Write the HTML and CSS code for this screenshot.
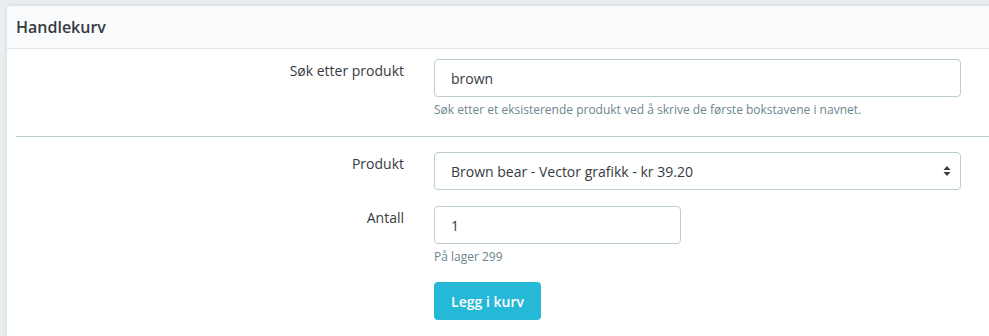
FILE: index.html
```html
<!DOCTYPE html>
<html lang="no">
<head>
<meta charset="utf-8">
<title>Handlekurv</title>
<link rel="stylesheet" href="styles.css">
</head>
<body>
<div class="card">
  <div class="card-header">Handlekurv</div>
  <div class="card-body">
    <div class="form-row">
      <label class="form-label" for="search">Søk etter produkt</label>
      <div class="form-field">
        <input id="search" class="input input-wide" type="text" value="brown">
        <div class="help">Søk etter et eksisterende produkt ved å skrive de første bokstavene i navnet.</div>
      </div>
    </div>
    <hr class="divider">
    <div class="form-row">
      <label class="form-label" for="product">Produkt</label>
      <div class="form-field">
        <div class="select-wrap">
          <select id="product" class="input input-wide select">
            <option>Brown bear - Vector grafikk - kr 39.20</option>
          </select>
          <svg class="select-arrow" width="8" height="12" viewBox="0 0 8 12" aria-hidden="true"><path d="M4 1 L7.5 5 H0.5 Z M4 11 L0.5 7 H7.5 Z" fill="#363a41"/></svg>
        </div>
      </div>
    </div>
    <div class="form-row row-qty">
      <label class="form-label" for="qty">Antall</label>
      <div class="form-field">
        <input id="qty" class="input input-narrow" type="text" value="1">
        <div class="help">På lager 299</div>
        <button class="btn" type="button">Legg i kurv</button>
      </div>
    </div>
  </div>
</div>
</body>
</html>
```
FILE: styles.css
```css
html { overflow: hidden; height: 100%; }
body {
  margin: 0;
  height: 100%;
  background: #eaedef;
  font-family: "Open Sans", "Liberation Sans", sans-serif;
  color: #363a41;
  font-size: 14px;
  line-height: 1.5;
}
.card {
  margin: 5px 0 0 6px;
  width: 1010px;
  height: calc(100% - 5px);
  overflow: hidden;
  background: #fff;
  border: 1px solid #dbe6e9;
  border-bottom: 0;
  border-radius: 5px 5px 0 0;
  box-shadow: 0 0 4px 0 rgba(0,0,0,0.06);
  box-sizing: border-box;
}
.card-header {
  height: 43px;
  box-sizing: border-box;
  padding: 0 9px;
  display: flex;
  align-items: center;
  background: #fafbfc;
  border-bottom: 1px solid #dbe6e9;
  font-size: 16px;
  font-weight: 600;
  color: #363a41;
}
.card-body {
  padding: 10px 9px 0 9px;
}
.form-row {
  display: grid;
  grid-template-columns: 388px 1fr;
  column-gap: 30px;
  align-items: start;
}
.row-qty { margin-top: 16px; }
.form-label {
  text-align: right;
  line-height: 21px;
  padding-top: 1px;
}
.form-field {
  display: flex;
  flex-direction: column;
  align-items: flex-start;
}
.input {
  box-sizing: border-box;
  height: 38px;
  border: 1px solid #bbcdd2;
  border-radius: 4px;
  padding: 0 16px;
  font-family: inherit;
  font-size: 14px;
  color: #363a41;
  background: #fff;
  outline: none;
}
.input-wide { width: 527px; }
.input-narrow { width: 247px; }
.select-wrap { position: relative; }
.select {
  appearance: none;
  -webkit-appearance: none;
  display: block;
}
.select-arrow {
  position: absolute;
  right: 10px;
  top: 13px;
}
.help {
  margin-top: 4px;
  font-size: 12px;
  line-height: 18px;
  color: #6c868e;
}
.divider {
  margin: 17px 0 15px 0;
  border: 0;
  border-top: 1px solid #bbcdd2;
}
.btn {
  margin-top: 16px;
  height: 38px;
  width: 107px;
  border: 0;
  border-radius: 4px;
  background: #25b9d7;
  color: #fff;
  font-family: inherit;
  font-size: 14px;
  font-weight: 600;
  padding: 0;
}
```
